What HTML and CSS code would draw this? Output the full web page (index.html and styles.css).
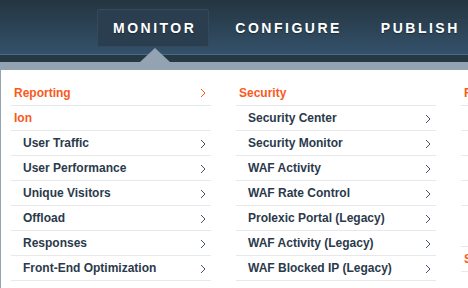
FILE: index.html
```html
<!DOCTYPE html>
<html lang="en">
<head>
  <meta charset="UTF-8">
  <title>Monitor</title>
  <link rel="stylesheet" href="styles.css">
</head>
<body>

<header class="topbar">
  <nav class="nav">
    <a class="nav-item active">MONITOR</a>
    <a class="nav-item">CONFIGURE</a>
    <a class="nav-item">PUBLISH</a>
  </nav>
</header>
<div class="topbar-line"></div>
<div class="topbar-band">
  <span class="pointer"></span>
</div>

<div class="menu-wrap">
  <div class="menu">
    <div class="col">
      <div class="row head">Reporting <svg class="chev" viewBox="0 0 6 10"><polyline points="1,1 5,5 1,9"/></svg></div>
      <div class="row head">Ion</div>
      <div class="row sub">User Traffic <svg class="chev" viewBox="0 0 6 10"><polyline points="1,1 5,5 1,9"/></svg></div>
      <div class="row sub">User Performance <svg class="chev" viewBox="0 0 6 10"><polyline points="1,1 5,5 1,9"/></svg></div>
      <div class="row sub">Unique Visitors <svg class="chev" viewBox="0 0 6 10"><polyline points="1,1 5,5 1,9"/></svg></div>
      <div class="row sub">Offload <svg class="chev" viewBox="0 0 6 10"><polyline points="1,1 5,5 1,9"/></svg></div>
      <div class="row sub">Responses <svg class="chev" viewBox="0 0 6 10"><polyline points="1,1 5,5 1,9"/></svg></div>
      <div class="row sub">Front-End Optimization <svg class="chev" viewBox="0 0 6 10"><polyline points="1,1 5,5 1,9"/></svg></div>
    </div>

    <div class="col">
      <div class="row head">Security</div>
      <div class="row sub">Security Center <svg class="chev" viewBox="0 0 6 10"><polyline points="1,1 5,5 1,9"/></svg></div>
      <div class="row sub">Security Monitor <svg class="chev" viewBox="0 0 6 10"><polyline points="1,1 5,5 1,9"/></svg></div>
      <div class="row sub">WAF Activity <svg class="chev" viewBox="0 0 6 10"><polyline points="1,1 5,5 1,9"/></svg></div>
      <div class="row sub">WAF Rate Control <svg class="chev" viewBox="0 0 6 10"><polyline points="1,1 5,5 1,9"/></svg></div>
      <div class="row sub">Prolexic Portal (Legacy) <svg class="chev" viewBox="0 0 6 10"><polyline points="1,1 5,5 1,9"/></svg></div>
      <div class="row sub">WAF Activity (Legacy) <svg class="chev" viewBox="0 0 6 10"><polyline points="1,1 5,5 1,9"/></svg></div>
      <div class="row sub">WAF Blocked IP (Legacy) <svg class="chev" viewBox="0 0 6 10"><polyline points="1,1 5,5 1,9"/></svg></div>
    </div>

    <div class="col col-edge">
      <div class="row head">R</div>
      <div class="row sub"></div>
      <div class="row sub"></div>
      <div class="row sub"></div>
      <div class="row sub"></div>
      <div class="row head group">S</div>
    </div>
  </div>
</div>

</body>
</html>
```

FILE: styles.css
```css
body {
  margin: 0;
  font-family: 'Liberation Sans', Arial, sans-serif;
  background: #94a3b2;
  overflow: hidden;
  width: 468px;
  height: 288px;
}
.topbar {
  height: 54px;
  background: linear-gradient(#24353f, #34516b);
  display: flex;
  align-items: center;
}
.nav {
  display: flex;
  gap: 10px;
  padding-left: 97px;
}
.nav-item {
  display: block;
  height: 36px;
  line-height: 36px;
  padding: 0 12px 0 15px;
  margin-top: 2px;
  color: #fff;
  font-size: 14px;
  font-weight: 700;
  letter-spacing: 2.5px;
  text-shadow: 0 1px 1px rgba(0, 0, 0, 0.4);
  border: 1px solid transparent;
  border-radius: 2px;
  white-space: nowrap;
}
.nav-item.active {
  background: #2a3e50;
  border-color: #34495b;
}
.topbar-line {
  height: 1px;
  background: #4e6985;
}
.topbar-band {
  position: relative;
  height: 7px;
  background: #263843;
}
.pointer {
  position: absolute;
  left: 140px;
  bottom: 0;
  width: 0;
  height: 0;
  border-left: 15px solid transparent;
  border-right: 15px solid transparent;
  border-bottom: 14px solid #94a3b2;
}
.menu-wrap {
  padding: 8px 0 0 1px;
}
.menu {
  background: #fff;
  height: 207px;
  padding: 11px 0 0 10px;
  display: flex;
  gap: 25px;
  overflow: hidden;
}
.col {
  flex: 0 0 200px;
  display: flex;
  flex-direction: column;
}
.col-edge {
  flex: 0 0 6px;
}
.row {
  height: 24px;
  border-bottom: 1px solid #e6e8ea;
  display: flex;
  align-items: center;
  justify-content: space-between;
  font-size: 12px;
  font-weight: 700;
  color: #2b3a4b;
  white-space: nowrap;
  padding-right: 5px;
}
.row.head {
  color: #f9591d;
  padding-left: 3px;
}
.row.sub {
  padding-left: 12px;
}
.col-edge .row {
  padding-right: 0;
}
.row.group {
  margin-top: 40px;
  border-top: 1px solid #e6e8ea;
}
.chev {
  width: 6px;
  height: 10px;
  margin-top: 2px;
}
.chev polyline {
  fill: none;
  stroke: #44546a;
  stroke-width: 1;
}
.head .chev {
  margin-top: 0;
}
.head .chev polyline {
  stroke: #f9591d;
}
```
